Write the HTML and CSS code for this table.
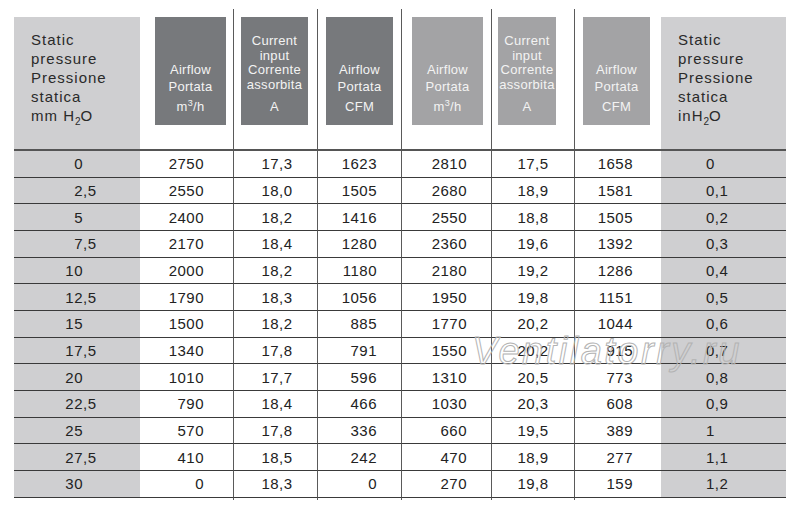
FILE: index.html
```html
<!DOCTYPE html>
<html lang="it">
<head>
<meta charset="utf-8">
<title>Performance table</title>
<link rel="stylesheet" href="styles.css">
</head>
<body>
<div class="wrap">
<table class="perf">
  <colgroup>
    <col class="c0"><col class="c1"><col class="c2"><col class="c3"><col class="c4"><col class="c5"><col class="c6"><col class="c7">
  </colgroup>
  <tbody>
    <tr class="sp-top"><td></td><td></td><td></td><td></td><td></td><td></td><td></td><td></td></tr>
    <tr class="hd">
      <td class="g ghead">Static<br>pressure<br>Pressione<br>statica<br>mm H<sub>2</sub>O</td>
      <td><div class="box dark b1"><div class="nm">Airflow<br>Portata</div><div class="un">m<sup>3</sup>/h</div></div></td>
      <td><div class="box dark b2"><div class="nm tight">Current<br>input<br>Corrente<br>assorbita</div><div class="un un-t">A</div></div></td>
      <td><div class="box dark b3"><div class="nm">Airflow<br>Portata</div><div class="un">CFM</div></div></td>
      <td><div class="box light b4"><div class="nm">Airflow<br>Portata</div><div class="un">m<sup>3</sup>/h</div></div></td>
      <td><div class="box light b5"><div class="nm tight">Current<br>input<br>Corrente<br>assorbita</div><div class="un un-t">A</div></div></td>
      <td><div class="box light b6"><div class="nm">Airflow<br>Portata</div><div class="un">CFM</div></div></td>
      <td class="g ghead">Static<br>pressure<br>Pressione<br>statica<br>inH<sub>2</sub>O</td>
    </tr>
    <tr class="dr"><td class="g"><span class="ip">0</span></td><td>2750</td><td>17,3</td><td>1623</td><td>2810</td><td>17,5</td><td>1658</td><td class="g">0</td></tr>
    <tr class="dr"><td class="g"><span class="ip">2</span>,5</td><td>2550</td><td>18,0</td><td>1505</td><td>2680</td><td>18,9</td><td>1581</td><td class="g">0,1</td></tr>
    <tr class="dr"><td class="g"><span class="ip">5</span></td><td>2400</td><td>18,2</td><td>1416</td><td>2550</td><td>18,8</td><td>1505</td><td class="g">0,2</td></tr>
    <tr class="dr"><td class="g"><span class="ip">7</span>,5</td><td>2170</td><td>18,4</td><td>1280</td><td>2360</td><td>19,6</td><td>1392</td><td class="g">0,3</td></tr>
    <tr class="dr"><td class="g"><span class="ip">10</span></td><td>2000</td><td>18,2</td><td>1180</td><td>2180</td><td>19,2</td><td>1286</td><td class="g">0,4</td></tr>
    <tr class="dr"><td class="g"><span class="ip">12</span>,5</td><td>1790</td><td>18,3</td><td>1056</td><td>1950</td><td>19,8</td><td>1151</td><td class="g">0,5</td></tr>
    <tr class="dr"><td class="g"><span class="ip">15</span></td><td>1500</td><td>18,2</td><td>885</td><td>1770</td><td>20,2</td><td>1044</td><td class="g">0,6</td></tr>
    <tr class="dr"><td class="g"><span class="ip">17</span>,5</td><td>1340</td><td>17,8</td><td>791</td><td>1550</td><td>20,2</td><td>915</td><td class="g">0,7</td></tr>
    <tr class="dr"><td class="g"><span class="ip">20</span></td><td>1010</td><td>17,7</td><td>596</td><td>1310</td><td>20,5</td><td>773</td><td class="g">0,8</td></tr>
    <tr class="dr"><td class="g"><span class="ip">22</span>,5</td><td>790</td><td>18,4</td><td>466</td><td>1030</td><td>20,3</td><td>608</td><td class="g">0,9</td></tr>
    <tr class="dr"><td class="g"><span class="ip">25</span></td><td>570</td><td>17,8</td><td>336</td><td>660</td><td>19,5</td><td>389</td><td class="g">1</td></tr>
    <tr class="dr"><td class="g"><span class="ip">27</span>,5</td><td>410</td><td>18,5</td><td>242</td><td>470</td><td>18,9</td><td>277</td><td class="g">1,1</td></tr>
    <tr class="dr"><td class="g"><span class="ip">30</span></td><td>0</td><td>18,3</td><td>0</td><td>270</td><td>19,8</td><td>159</td><td class="g">1,2</td></tr>
    <tr class="sp-bot"><td></td><td></td><td></td><td></td><td></td><td></td><td></td><td></td></tr>
  </tbody>
</table>
<div class="watermark">Ventilatorry.ru</div>
</div>
</body>
</html>
```

FILE: styles.css
```css
html, body {
  margin: 0;
  padding: 0;
  background: #ffffff;
}

body {
  font-family: "Liberation Sans", Arial, sans-serif;
  color: #222222;
}

.wrap {
  position: relative;
  width: 800px;
  height: 516px;
  overflow: hidden;
}

.perf {
  border-collapse: separate;
  border-spacing: 0;
  table-layout: fixed;
  width: 772px;
  margin: 9px 0 0 14px;
}

.c0 { width: 126px; }
.c1 { width: 93px; }
.c2 { width: 84px; }
.c3 { width: 84px; }
.c4 { width: 90px; }
.c5 { width: 83px; }
.c6 { width: 87px; }
.c7 { width: 125px; }

.perf td {
  padding: 0;
}

/* vertical rules between the data columns */
.perf tr td:nth-child(n+3):nth-child(-n+7) {
  border-left: 1px solid #5a5a5a;
}

.sp-top { height: 8px; }
.sp-bot { height: 2px; }

.g {
  background: #cfcfd1;
}

/* header */
.hd { height: 134px; }

.hd td {
  vertical-align: top;
  border-bottom: 2px solid #555555;
}

.ghead {
  padding: 13px 0 0 17px !important;
  font-size: 15px;
  line-height: 19px;
  letter-spacing: 1px;
  color: #2a2a2a;
}

.ghead sub {
  font-size: 10px;
  line-height: 0;
  vertical-align: -4px;
  letter-spacing: 0;
}

.box {
  height: 108px;
  box-sizing: border-box;
  padding-bottom: 11px;
  display: flex;
  flex-direction: column;
  justify-content: flex-end;
  align-items: center;
  text-align: center;
  color: #f3f3f3;
  font-size: 13px;
  letter-spacing: 0.3px;
}

.dark { background: #77797c; }
.light { background: #a3a3a5; }

.b1 { margin-left: 15px; width: 71px; }
.b2 { margin-left: 7px; width: 67px; }
.b3 { margin-left: 8px; width: 67px; }
.b4 { margin-left: 10px; width: 71px; }
.b5 { margin-left: 6px; width: 58px; }
.b6 { margin-left: 8px; width: 67px; }

.nm { line-height: 17px; }
.nm.tight { line-height: 14.5px; }

.un {
  line-height: 14px;
  margin-top: 5px;
}

.un.un-t { margin-top: 8px; }

.un sup {
  font-size: 9px;
  line-height: 0;
  vertical-align: 5px;
}

/* data rows */
.dr { height: 26.667px; }

.dr td {
  font-size: 15px;
  letter-spacing: 0.5px;
  vertical-align: middle;
  border-bottom: 1px solid #3a3a3a;
  white-space: nowrap;
}

.ip {
  display: inline-block;
  width: 69px;
  text-align: right;
}

.dr td:nth-child(2) { text-align: right; padding-right: 29px; }
.dr td:nth-child(3) { text-align: center; padding-left: 3px; }
.dr td:nth-child(4) { text-align: right; padding-right: 24px; }
.dr td:nth-child(5) { text-align: right; padding-right: 24px; }
.dr td:nth-child(6) { text-align: center; }
.dr td:nth-child(7) { text-align: right; padding-right: 28px; }
.dr td:nth-child(8) { text-align: left; padding-left: 45px; }

.watermark {
  position: absolute;
  left: 472px;
  top: 332px;
  font-family: "Liberation Sans", Arial, sans-serif;
  font-style: italic;
  font-size: 38px;
  line-height: 38px;
  letter-spacing: 2.5px;
  color: transparent;
  -webkit-text-stroke: 1px #b3b3b3;
  pointer-events: none;
}
```
